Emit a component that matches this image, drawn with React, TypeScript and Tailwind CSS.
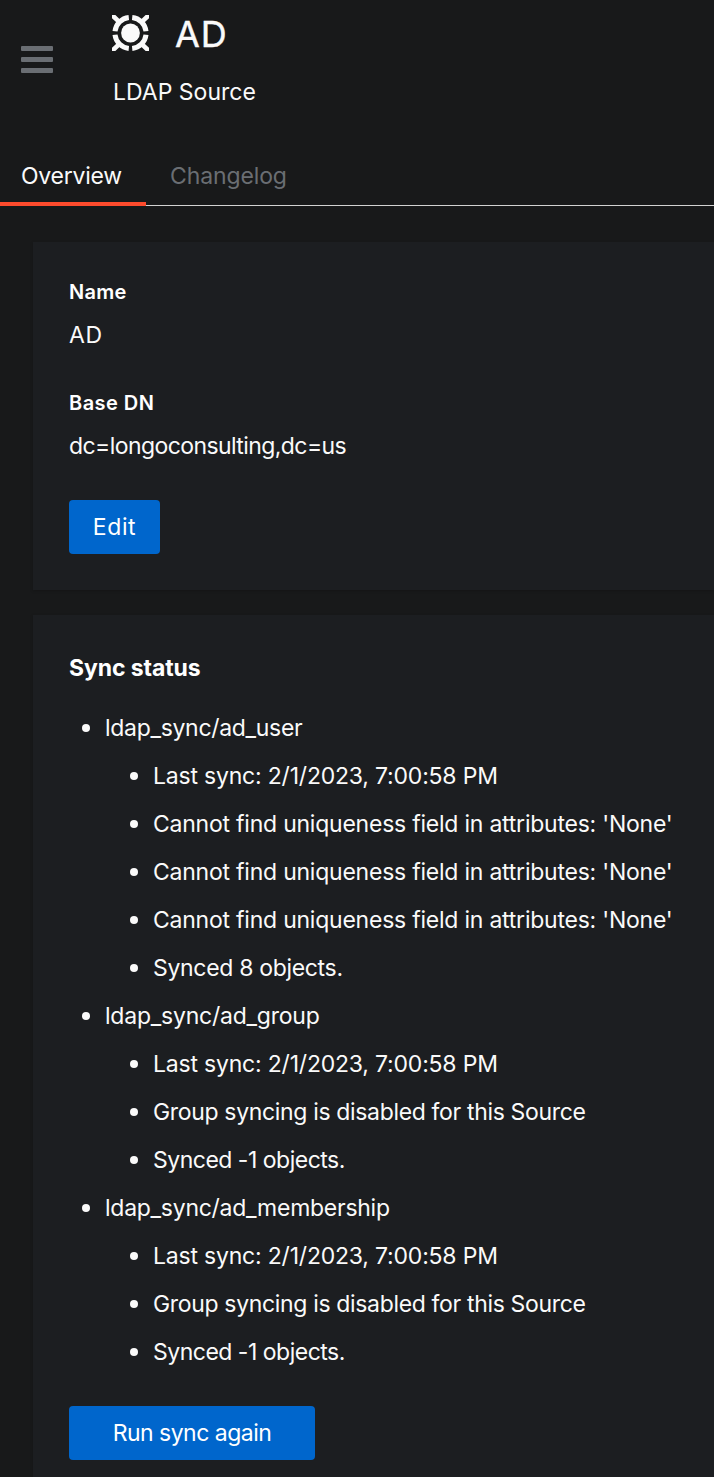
type Line = { text: string; tracking: string };
type Task = { name: Line; messages: Line[] };

const lastSync: Line = { text: "Last sync: 2/1/2023, 7:00:58 PM", tracking: "tracking-[-0.2px]" };
const noField: Line = { text: "Cannot find uniqueness field in attributes: 'None'", tracking: "tracking-[-0.23px]" };
const disabled: Line = { text: "Group syncing is disabled for this Source", tracking: "tracking-[-0.34px]" };
const noneSynced: Line = { text: "Synced -1 objects.", tracking: "tracking-[-0.5px]" };

const tasks: Task[] = [
  {
    name: { text: "ldap_sync/ad_user", tracking: "tracking-[-0.3px]" },
    messages: [lastSync, noField, noField, noField, { text: "Synced 8 objects.", tracking: "tracking-[-0.32px]" }],
  },
  {
    name: { text: "ldap_sync/ad_group", tracking: "tracking-[-0.22px]" },
    messages: [lastSync, disabled, noneSynced],
  },
  {
    name: { text: "ldap_sync/ad_membership", tracking: "tracking-[-0.26px]" },
    messages: [lastSync, disabled, noneSynced],
  },
];

function Item({ line }: { line: Line }) {
  return (
    <div className="flex h-12 items-center">
      <span className="mr-[15px] size-2 shrink-0 rounded-full bg-[#fafafa]" />
      <span className={line.tracking}>{line.text}</span>
    </div>
  );
}

function SourceIcon() {
  return (
    <svg className="h-[36px] w-[37px] shrink-0" viewBox="0 0 37 36" fill="none" stroke="#fafafa">
      <circle cx="18.5" cy="18" r="9.4" fill="#fafafa" stroke="none" />
      <path
        strokeWidth="5"
        d="M16.8 2.6A15.5 15.5 0 0 0 3 16.3M20.2 2.6A15.5 15.5 0 0 1 34 16.3M3 19.7A15.5 15.5 0 0 0 16.8 33.4M34 19.7A15.5 15.5 0 0 1 20.2 33.4"
      />
      <path strokeWidth="4.6" d="M-1 -1L7.5 7.2M38 -1L29.5 7.2M-1 37L7.5 28.8M38 37L29.5 28.8" />
    </svg>
  );
}

export default function App() {
  return (
    <div className="h-[1477px] w-full overflow-hidden bg-[#18191a] font-['Inter',sans-serif] text-[23px] leading-9 whitespace-nowrap text-[#fafafa]">
      <header className="flex h-[146px]">
        <button className="mt-[46px] ml-[21px] flex h-[27px] w-8 flex-col justify-between" aria-label="Menu">
          <span className="h-[5px] w-full rounded-[1px] bg-[#6a6e73]" />
          <span className="h-[5px] w-full rounded-[1px] bg-[#6a6e73]" />
          <span className="h-[5px] w-full rounded-[1px] bg-[#6a6e73]" />
        </button>
        <div className="ml-[59px] pt-[15px]">
          <h1 className="flex h-9 items-center text-[36px]">
            <SourceIcon />
            <span className="ml-[26px] pt-px tracking-[1px] [-webkit-text-stroke:0.4px_#fafafa]">AD</span>
          </h1>
          <p className="mt-[23px] pl-px">LDAP Source</p>
        </div>
      </header>

      <nav className="flex h-[60px]">
        <div className="w-[146px] border-b-4 border-[#fd4b2d] pt-3 pl-[21px] tracking-[-0.25px]">Overview</div>
        <div className="flex-1 border-b border-[#d2d2d2] pt-3 pl-6 tracking-[-0.12px] text-[#6a6e73]">Changelog</div>
      </nav>

      <main className="flex flex-col gap-[25px] pt-9 pl-[33px]">
        <section className="h-[348px] bg-[#1c1e21] pt-8 pl-9 shadow-[0_1px_3px_rgba(0,0,0,0.2)]">
          <dl>
            <dt className="text-[20px] font-semibold tracking-[0.3px] text-white">Name</dt>
            <dd className="mt-[7px] tracking-[0.6px]">AD</dd>
            <dt className="mt-8 text-[20px] font-semibold tracking-[0.45px] text-white">Base DN</dt>
            <dd className="mt-[7px] tracking-[-0.58px]">dc=longoconsulting,dc=us</dd>
          </dl>
          <button className="mt-9 h-[54px] w-[91px] rounded bg-[#0066cc] text-[23px] tracking-[0.6px] text-white">
            Edit
          </button>
        </section>

        <section className="h-[900px] bg-[#1c1e21] pt-[35px] pl-9 shadow-[0_1px_3px_rgba(0,0,0,0.2)]">
          <h2 className="font-bold tracking-[-0.1px] text-white">Sync status</h2>
          <ul className="mt-[18px] pl-[13px]">
            {tasks.map((task) => (
              <li key={task.name.text}>
                <Item line={task.name} />
                <ul className="pl-12">
                  {task.messages.map((message, i) => (
                    <li key={i}>
                      <Item line={message} />
                    </li>
                  ))}
                </ul>
              </li>
            ))}
          </ul>
          <button className="mt-[30px] h-[54px] w-[246px] rounded bg-[#0066cc] tracking-[-0.52px] text-white">
            Run sync again
          </button>
        </section>
      </main>
    </div>
  );
}
